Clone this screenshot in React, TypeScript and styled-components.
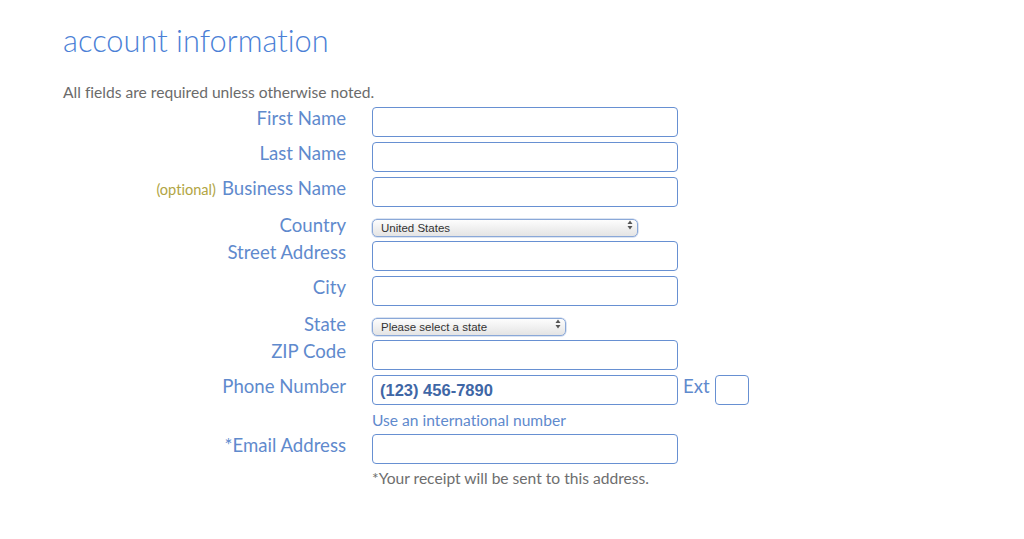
import React from "react";
import styled, { createGlobalStyle } from "styled-components";

const Global = createGlobalStyle`
  html, body { margin: 0; padding: 0; background: #ffffff; }
  body {
    font-family: Lato, "Open Sans", sans-serif;
    font-variant-ligatures: none;
  }
  * { box-sizing: border-box; }
`;

const Page = styled.div`
  width: 1024px;
  height: 539px;
  padding: 23px 0 0 63px;
  overflow: hidden;
`;

const Heading = styled.h1`
  margin: 0;
  font-family: Lato, sans-serif;
  font-weight: 300;
  font-size: 30.8px;
  line-height: 36px;
  color: #4b7fd6;
`;

const Note = styled.p`
  margin: 23px 0 0 0;
  font-size: 15.6px;
  line-height: 20px;
  color: #6b6b6b;
`;

const Form = styled.div`
  display: flex;
  flex-direction: column;
`;

const Row = styled.div<{ $select?: boolean }>`
  display: flex;
  align-items: ${(p) => (p.$select ? "flex-end" : "flex-start")};
  gap: 26px;
  margin-top: 5px;
  height: ${(p) => (p.$select ? "24px" : "30px")};
`;

const Label = styled.label`
  width: 283px;
  flex: none;
  text-align: right;
  font-size: 18.6px;
  font-weight: 400;
  line-height: 22px;
  color: #5f8acd;
  white-space: nowrap;
`;

const Optional = styled.span`
  font-size: 14.6px;
  color: #b1a544;
  margin-right: 6px;
`;

const Field = styled.div`
  display: flex;
  align-items: flex-start;
  gap: 5px;
`;

const TextInput = styled.input<{ $w?: number }>`
  width: ${(p) => p.$w ?? 306}px;
  height: 30px;
  border: 1px solid #6790d2;
  border-radius: 4px;
  background: #fff;
  padding: 0 7px;
  font-family: "Liberation Sans", Arial, sans-serif;
  font-weight: bold;
  font-size: 16.5px;
  color: #3f67a6;
  outline: none;
`;

const Ext = styled.span`
  font-size: 18.6px;
  line-height: 22px;
  color: #5f8acd;
`;

const SelectWrap = styled.div<{ $w: number }>`
  position: relative;
  width: ${(p) => p.$w}px;
  height: 18px;
  margin-bottom: 2px;
`;

const Select = styled.select`
  appearance: none;
  -webkit-appearance: none;
  width: 100%;
  height: 18px;
  margin: 0;
  padding: 0 0 0 8px;
  border: 1px solid #8aa8d8;
  border-radius: 5px;
  background: linear-gradient(#fdfdfd, #e4e4e4);
  font-family: "Liberation Sans", Arial, sans-serif;
  font-size: 11.5px;
  line-height: 16px;
  color: #333;
  box-shadow: 0 0 0 0.5px #b8c9e6;
  outline: none;
`;

const Arrows = styled.svg`
  position: absolute;
  right: 5px;
  top: 4px;
  pointer-events: none;
`;

const Hint = styled.div<{ $gray?: boolean }>`
  margin: 5px 0 0 309px;
  font-size: 15.6px;
  line-height: 20px;
  color: ${(p) => (p.$gray ? "#6e6e6e" : "#5f8acd")};
`;

const ArrowIcon = () => (
  <Arrows width="6" height="10" viewBox="0 0 6 10">
    <path d="M3 0.5 L5.5 4 L0.5 4 Z" fill="#555" />
    <path d="M3 9.5 L5.5 6 L0.5 6 Z" fill="#555" />
  </Arrows>
);

const InputRow = ({ label, optional }: { label: string; optional?: boolean }) => (
  <Row>
    <Label>
      {optional && <Optional>(optional)</Optional>}
      {label}
    </Label>
    <Field>
      <TextInput />
    </Field>
  </Row>
);

const SelectRow = ({ label, value, w }: { label: string; value: string; w: number }) => (
  <Row $select>
    <Label>{label}</Label>
    <Field>
      <SelectWrap $w={w}>
        <Select defaultValue={value}>
          <option>{value}</option>
        </Select>
        <ArrowIcon />
      </SelectWrap>
    </Field>
  </Row>
);

export default function App() {
  return (
    <>
      <Global />
      <Page>
        <Heading>account information</Heading>
        <Note>All fields are required unless otherwise noted.</Note>
        <Form>
          <InputRow label="First Name" />
          <InputRow label="Last Name" />
          <InputRow label="Business Name" optional />
          <SelectRow label="Country" value="United States" w={266} />
          <InputRow label="Street Address" />
          <InputRow label="City" />
          <SelectRow label="State" value="Please select a state" w={194} />
          <InputRow label="ZIP Code" />
          <Row>
            <Label>Phone Number</Label>
            <Field>
              <TextInput defaultValue="(123) 456-7890" />
              <Ext>Ext</Ext>
              <TextInput $w={34} />
            </Field>
          </Row>
          <Hint>Use an international number</Hint>
          <Row style={{ marginTop: 4 }}>
            <Label>*Email Address</Label>
            <Field>
              <TextInput />
            </Field>
          </Row>
          <Hint $gray style={{ marginTop: 4 }}>*Your receipt will be sent to this address.</Hint>
        </Form>
      </Page>
    </>
  );
}
